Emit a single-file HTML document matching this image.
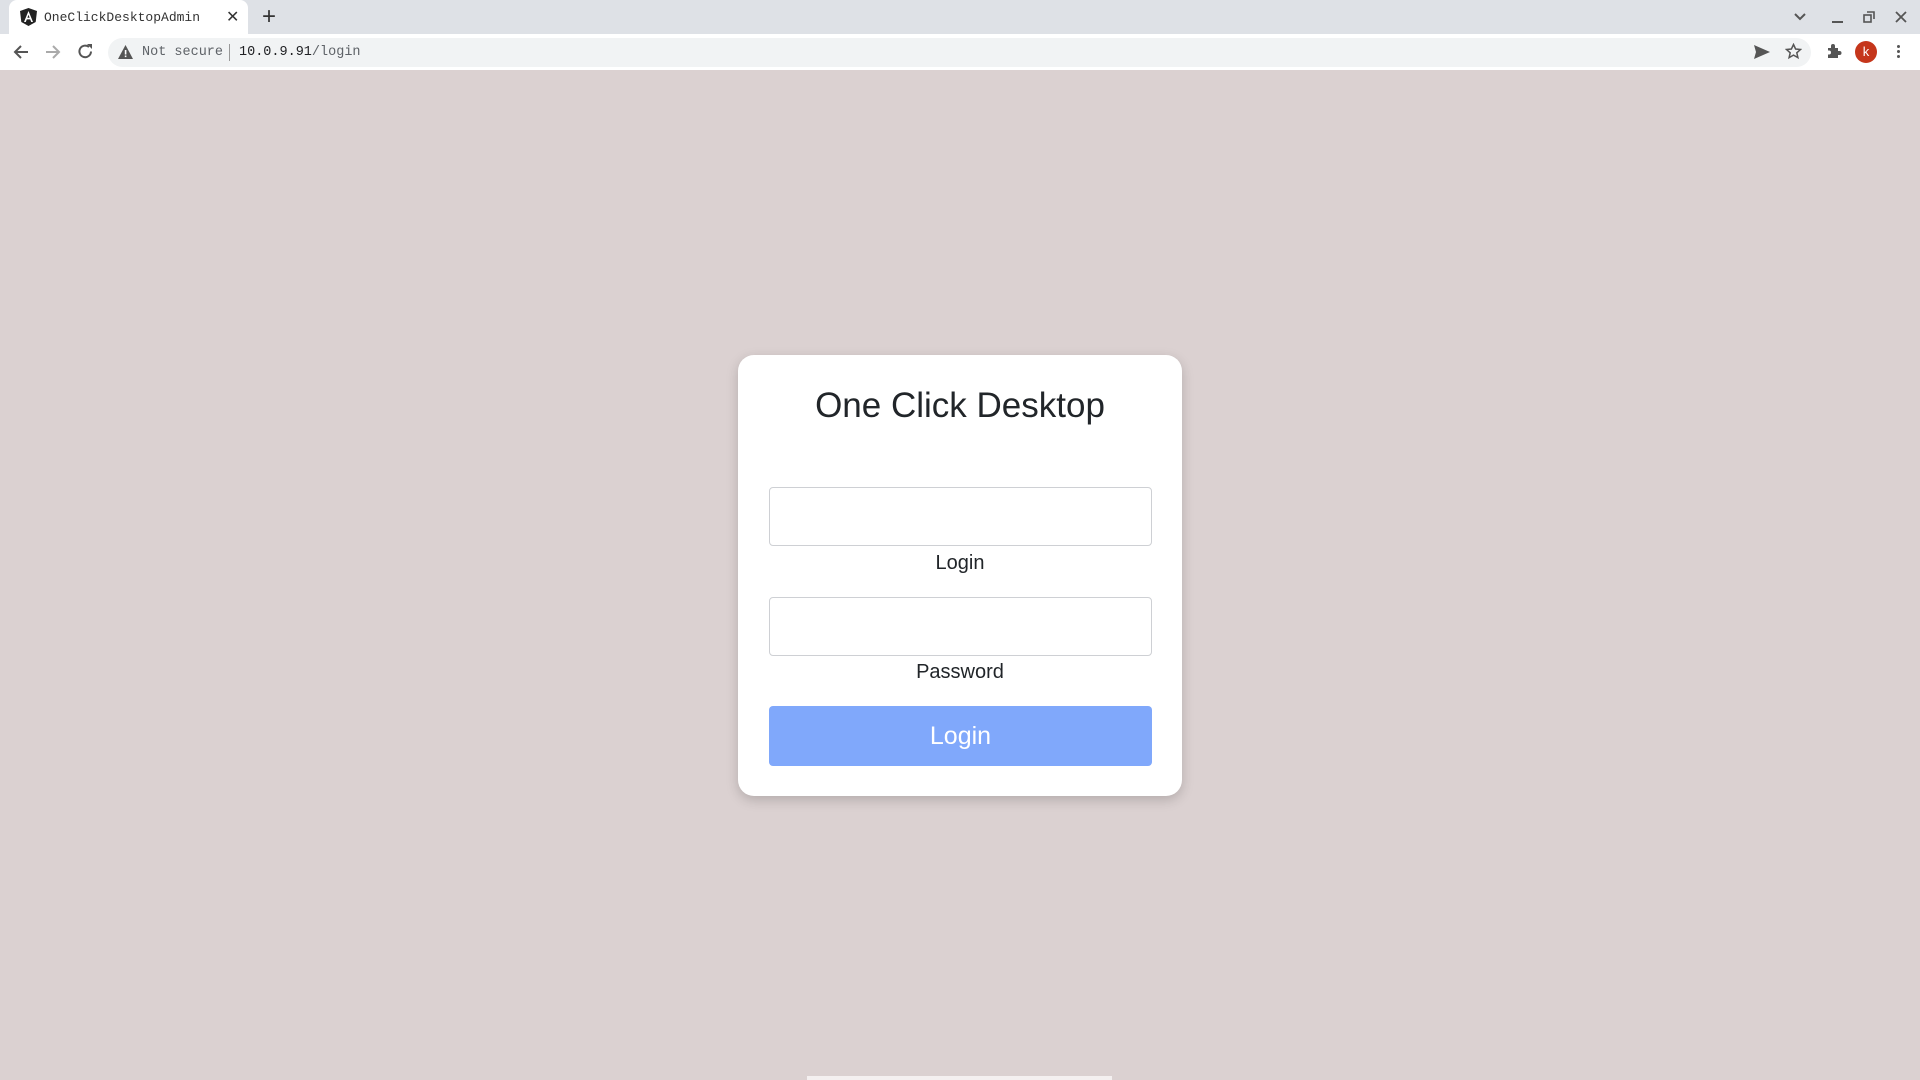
<!DOCTYPE html>
<html><head><meta charset="utf-8"><style>
*{margin:0;padding:0;box-sizing:border-box}
body{width:1920px;height:1080px;background:#dbd1d1;font-family:"Liberation Sans",sans-serif;position:relative;overflow:hidden}
.tabs{position:absolute;left:0;top:0;width:1920px;height:34px;background:#dee1e6}
.tab{position:absolute;left:9px;top:0;width:239px;height:34px;background:#fff;border-radius:8px 8px 0 0}
.mono{font-family:"Liberation Mono",monospace}
.toolbar{position:absolute;left:0;top:34px;width:1920px;height:36px;background:#fff}
.omni{position:absolute;left:108px;top:38px;width:1703px;height:29px;background:#f1f3f4;border-radius:15px}
.card{position:absolute;left:738px;top:355px;width:444px;height:441px;background:#fff;border-radius:16px;box-shadow:0 4px 12px rgba(0,0,0,.18)}
.title{position:absolute;left:0;width:100%;top:386px;text-align:center;font-size:35px;color:#212529}
.inp{position:absolute;left:769px;width:383px;height:59px;border:1px solid #ced0d4;border-radius:4px;background:#fff}
.lbl{position:absolute;left:738px;width:444px;text-align:center;font-size:20px;color:#212529}
.btn{position:absolute;left:769px;top:706px;width:383px;height:60px;background:#80a8fb;border-radius:4px;color:#fff;font-size:25px;text-align:center;line-height:60px}
</style></head><body>
<div class="tabs">
 <div class="tab">
  <svg style="position:absolute;left:11px;top:8px" width="17" height="18" viewBox="0 0 17 18"><path d="M8.5 0L17 3l-1.3 11L8.5 18 1.3 14 0 3z" fill="#222"/><path d="M8.5 3L4 14h1.8l1-2.6h3.4l1 2.6H13zM7.4 9.8l1.1-3 1.1 3z" fill="#fff"/></svg>
  <span class="mono" style="position:absolute;left:35px;top:10px;font-size:13px;color:#333">OneClickDesktopAdmin</span>
  <span style="position:absolute;left:217px;top:7px;font-size:16px;color:#333">✕</span>
 </div>
 <span style="position:absolute;left:262px;top:3px;font-size:24px;color:#333">+</span>
 <svg style="position:absolute;left:1793px;top:12px" width="14" height="10"><path d="M2 2l5 5 5-5" stroke="#555" stroke-width="2" fill="none"/></svg>
 <div style="position:absolute;left:1832px;top:21px;width:11px;height:2px;background:#555"></div>
 <svg style="position:absolute;left:1863px;top:11px" width="12" height="12"><rect x="1" y="4" width="7" height="7" fill="none" stroke="#555" stroke-width="1.6"/><path d="M4 1h7v7" fill="none" stroke="#555" stroke-width="1.6"/></svg>
 <svg style="position:absolute;left:1895px;top:11px" width="12" height="12"><path d="M1 1l10 10M11 1L1 11" stroke="#555" stroke-width="1.8"/></svg>
</div>
<div class="toolbar"></div>
<svg style="position:absolute;left:13px;top:44px" width="16" height="16"><path d="M15 8H2M8 2L2 8l6 6" stroke="#555" stroke-width="2" fill="none"/></svg>
<svg style="position:absolute;left:45px;top:44px" width="16" height="16"><path d="M1 8h13M8 2l6 6-6 6" stroke="#aaa" stroke-width="2" fill="none"/></svg>
<svg style="position:absolute;left:77px;top:43px" width="17" height="17"><path d="M14 8.5A5.8 5.8 0 1 1 12 4" stroke="#555" stroke-width="2" fill="none"/><path d="M10 1h5v5z" fill="#555"/></svg>
<div class="omni"></div>
<svg style="position:absolute;left:118px;top:45px" width="15" height="14"><path d="M7.5 0L15 14H0z" fill="#555"/><rect x="6.8" y="5" width="1.6" height="4.5" fill="#fff"/><rect x="6.8" y="10.5" width="1.6" height="1.6" fill="#fff"/></svg>
<span class="mono" style="position:absolute;left:142px;top:45px;font-size:13.5px;color:#5f6368">Not secure</span>
<div style="position:absolute;left:229px;top:44px;width:1px;height:17px;background:#999"></div>
<span class="mono" style="position:absolute;left:239px;top:45px;font-size:13.5px;color:#202124">10.0.9.91<span style="color:#5f6368">/login</span></span>
<svg style="position:absolute;left:1754px;top:45px" width="16" height="14"><path d="M0 0l16 7-16 7 2-7z" fill="#555"/></svg>
<svg style="position:absolute;left:1785px;top:43px" width="17" height="17"><path d="M8.5 1.5l2.1 4.5 4.9.5-3.7 3.3 1.1 4.8-4.4-2.5-4.4 2.5 1.1-4.8-3.7-3.3 4.9-.5z" fill="none" stroke="#555" stroke-width="1.5"/></svg>
<svg style="position:absolute;left:1826px;top:43px" width="16" height="16"><path d="M2 5h3V3a2 2 0 0 1 4 0v2h3v3h1.5a2 2 0 0 1 0 4H12v3H2v-3.5h1a2 2 0 0 0 0-4H2z" fill="#555"/></svg>
<div style="position:absolute;left:1855px;top:41px;width:22px;height:22px;border-radius:50%;background:#c5361b;color:#fff;font-size:13px;text-align:center;line-height:22px">k</div>
<div style="position:absolute;left:1897px;top:45px;width:3px;height:3px;border-radius:50%;background:#555;box-shadow:0 5px 0 #555,0 10px 0 #555"></div>

<div class="card"></div>
<div class="title">One Click Desktop</div>
<div class="inp" style="top:487px"></div>
<div class="lbl" style="top:552px">Login</div>
<div class="inp" style="top:597px"></div>
<div class="lbl" style="top:661px">Password</div>
<div class="btn">Login</div>
<div style="position:absolute;left:807px;top:1076px;width:305px;height:4px;background:#f4f0f0"></div>
</body></html>
